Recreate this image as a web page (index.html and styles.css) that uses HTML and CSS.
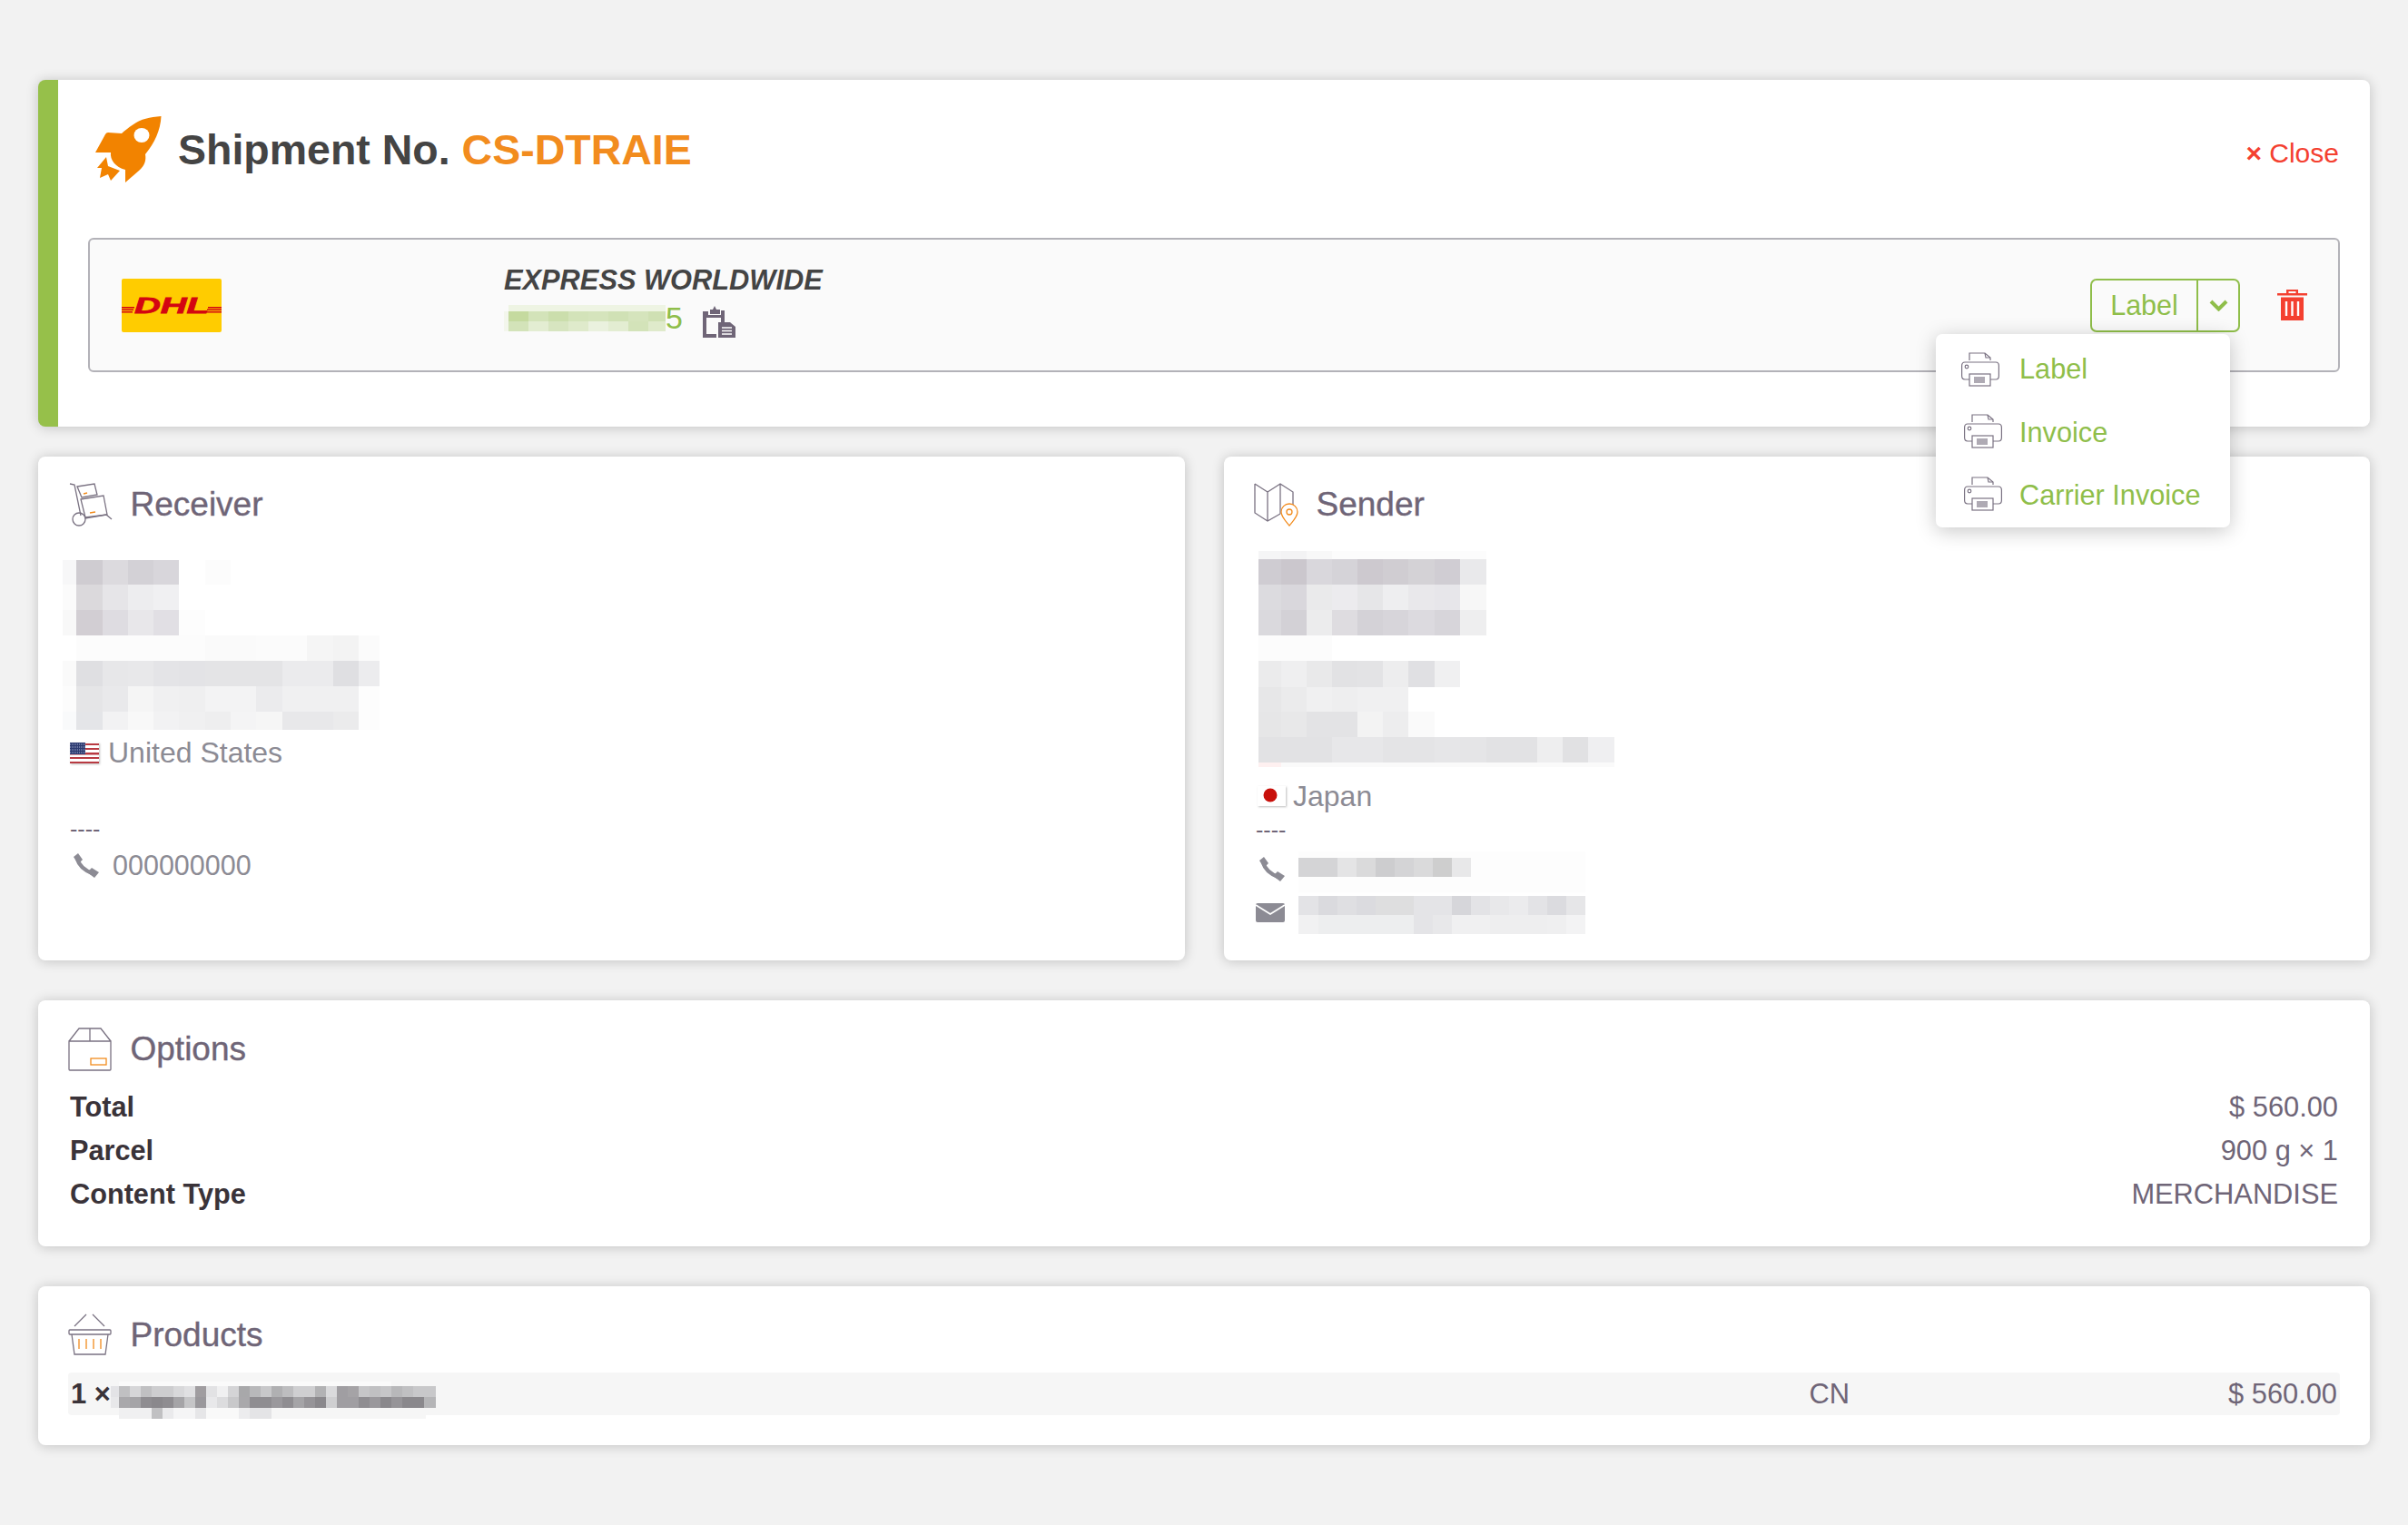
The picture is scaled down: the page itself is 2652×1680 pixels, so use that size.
FILE: index.html
```html
<!DOCTYPE html>
<html lang="en">
<head>
<meta charset="utf-8">
<title>Shipment CS-DTRAIE</title>
<link rel="stylesheet" href="styles.css">
</head>
<body>
<main class="page">
  <section class="card card-main">
    <header class="main-head">
      <div class="title-group">
        <svg class="rocket" viewBox="0 0 73 74" width="73" height="74"><path fill="#f28300" d="M72.5 0C60 1 50 3 42 9 36 13 32 16 29 19L14 18Q12 18 11 20L0 40 17 40C16 48 22 56 33 59L33 73 48 60C55 54 56 48 55 42 65 30 72 15 72.5 0Z"/><ellipse cx="51" cy="21" rx="8.5" ry="8" fill="#fff"/><path fill="#f28300" d="M12 45 14 55 27 60 17 71 14 64 5 68 7 57 2 57Z"/></svg>
        <h1 class="title">Shipment No. <span class="title-no">CS-DTRAIE</span></h1>
      </div>
      <a class="close"><b>×</b> Close</a>
    </header>
    <div class="carrier">
      <svg class="dhl" viewBox="0 0 110 59" width="110" height="59"><rect width="110" height="59" rx="2" fill="#fc0"/><g fill="#d40511"><rect y="31" width="14" height="1.5"/><rect y="33.5" width="13" height="1.5"/><rect y="36" width="12" height="1.5"/><rect x="95" y="31" width="15" height="1.5"/><rect x="94" y="33.5" width="16" height="1.5"/><rect x="93" y="36" width="17" height="1.5"/></g><text class="dhl-text" x="14" y="38" textLength="82" lengthAdjust="spacingAndGlyphs">DHL</text></svg>
      <div class="service">
        <div class="service-name">EXPRESS WORLDWIDE</div>
        <div class="tracking">
          <svg class="pix pix-tracking" width="178" height="29"><rect x="5" width="173" height="7" fill="#eef4e3"/><rect y="7" width="5" height="22" fill="#f3f6ec"/><rect x="5" y="7" width="22" height="11" fill="#c5da9f"/><rect x="27" y="7" width="22" height="11" fill="#d3e3b9"/><rect x="49" y="7" width="22" height="11" fill="#cbdeac"/><rect x="71" y="7" width="22" height="11" fill="#d3e3b9"/><rect x="93" y="7" width="22" height="11" fill="#d5e4bc"/><rect x="115" y="7" width="22" height="11" fill="#d0e1b5"/><rect x="137" y="7" width="22" height="11" fill="#d5e4bc"/><rect x="159" y="7" width="19" height="11" fill="#cfe0b3"/><rect x="5" y="18" width="22" height="11" fill="#d3e3b9"/><rect x="27" y="18" width="22" height="11" fill="#e3edd2"/><rect x="49" y="18" width="22" height="11" fill="#d7e5c0"/><rect x="71" y="18" width="22" height="11" fill="#dfeacb"/><rect x="93" y="18" width="22" height="11" fill="#eaf1de"/><rect x="115" y="18" width="22" height="11" fill="#e3edd2"/><rect x="137" y="18" width="22" height="11" fill="#d3e3b9"/><rect x="159" y="18" width="19" height="11" fill="#dfeacb"/></svg>
          <span class="tracking-end">5</span>
          <svg class="clip" viewBox="0 0 36 35" width="36" height="35"><path fill="#6f6577" d="M0 6H6V10H20V5H24V18H20V13H4V31H15V35H0ZM8 9V4H11L13 0 15 4H19V9Z"/><path fill="#6f6577" d="M17 18H30L36 23V35H17Z"/><path stroke="#fff" stroke-width="1.5" d="M21 24H32M21 27.500H32M21 31H32"/></svg>
        </div>
      </div>
      <div class="actions">
        <div class="split">
          <button class="split-label">Label</button>
          <button class="split-caret"><svg viewBox="0 0 21 13" width="21" height="13"><path d="M2 2 10.500 10.500 19 2" fill="none" stroke="#8fbe4a" stroke-width="4"/></svg></button>
          <ul class="menu">
            <li class="menu-item"><svg class="printer" viewBox="0 0 42 38" width="42" height="38"><g fill="none" stroke="#7a7282" stroke-width="1.200"><path d="M9 9V1H26L32 6V9"/><path d="M26 1 27 6H32" /><path d="M9 30H4Q.6 30 .6 26V15Q.6 11 4 11H38Q41.400 11 41.400 15V26Q41.400 30 38 30H32"/><circle cx="6" cy="16" r="1.800"/><rect x="9" y="24" width="23" height="13" fill="#fff"/><path d="M15 27V34M17 27V34M19 27V34M21 27V34M23 27V34M25 27V34"/></g></svg><span>Label</span></li>
            <li class="menu-item menu-item-shift"><svg class="printer" viewBox="0 0 42 38" width="42" height="38"><g fill="none" stroke="#7a7282" stroke-width="1.200"><path d="M9 9V1H26L32 6V9"/><path d="M26 1 27 6H32" /><path d="M9 30H4Q.6 30 .6 26V15Q.6 11 4 11H38Q41.400 11 41.400 15V26Q41.400 30 38 30H32"/><circle cx="6" cy="16" r="1.800"/><rect x="9" y="24" width="23" height="13" fill="#fff"/><path d="M15 27V34M17 27V34M19 27V34M21 27V34M23 27V34M25 27V34"/></g></svg><span>Invoice</span></li>
            <li class="menu-item menu-item-shift"><svg class="printer" viewBox="0 0 42 38" width="42" height="38"><g fill="none" stroke="#7a7282" stroke-width="1.200"><path d="M9 9V1H26L32 6V9"/><path d="M26 1 27 6H32" /><path d="M9 30H4Q.6 30 .6 26V15Q.6 11 4 11H38Q41.400 11 41.400 15V26Q41.400 30 38 30H32"/><circle cx="6" cy="16" r="1.800"/><rect x="9" y="24" width="23" height="13" fill="#fff"/><path d="M15 27V34M17 27V34M19 27V34M21 27V34M23 27V34M25 27V34"/></g></svg><span>Carrier Invoice</span></li>
          </ul>
        </div>
        <svg class="trash" viewBox="0 0 33 34" width="33" height="34"><path fill="#f44030" d="M10 0H23V4H33V6.500H0V4H10ZM12.500 2V4H20.500V2ZM4 8.500H29V34H4Z"/><path stroke="#fff" stroke-width="2.400" d="M10 13V29M16.500 13V29M23 13V29"/></svg>
      </div>
    </div>
  </section>

  <div class="two-col">
    <section class="card card-address">
      <header class="card-head">
        <svg class="head-icon" viewBox="0 0 50 48" width="50" height="48"><g fill="none" stroke="#7a7282" stroke-width="1.300"><path d="M2 1 7 2 14 36"/><circle cx="12" cy="40" r="7"/><path d="M18.500 39 42 35 48 40"/><path d="M10 4 29 1 32 13 15 16Z"/><path d="M14 18 39 14 43 35 19 38Z"/></g><path d="M17 12 21 11M24 33 30 32" stroke="#f28c1e" stroke-width="1.500"/></svg>
        <h2 class="card-title">Receiver</h2>
      </header>
      <svg class="pix pix-receiver" width="349" height="187"><rect width="15" height="27" fill="#f7f7f8"/><rect x="15" width="29" height="27" fill="#cfccd1"/><rect x="44" width="28" height="27" fill="#dcdade"/><rect x="72" width="28" height="27" fill="#d3d1d6"/><rect x="100" width="28" height="27" fill="#d8d6db"/><rect x="157" width="28" height="27" fill="#fcfcfc"/><rect y="27" width="15" height="28" fill="#fbfbfb"/><rect x="15" y="27" width="29" height="28" fill="#dbd9dc"/><rect x="44" y="27" width="28" height="28" fill="#e6e5e8"/><rect x="72" y="27" width="28" height="28" fill="#ededef"/><rect x="100" y="27" width="28" height="28" fill="#f0f0f2"/><rect y="55" width="15" height="28" fill="#f8f8f8"/><rect x="15" y="55" width="29" height="28" fill="#d2ced3"/><rect x="44" y="55" width="28" height="28" fill="#dedce1"/><rect x="72" y="55" width="28" height="28" fill="#e8e7ea"/><rect x="100" y="55" width="28" height="28" fill="#e1dfe4"/><rect x="128" y="55" width="29" height="28" fill="#fdfdfd"/><rect x="15" y="83" width="142" height="28" fill="#fcfcfc"/><rect x="157" y="83" width="56" height="28" fill="#fafafa"/><rect x="213" y="83" width="56" height="28" fill="#fbfbfb"/><rect x="269" y="83" width="29" height="28" fill="#f5f5f5"/><rect x="298" y="83" width="28" height="28" fill="#f3f3f3"/><rect x="326" y="83" width="23" height="28" fill="#fbfbfb"/><rect y="111" width="15" height="28" fill="#fafafa"/><rect x="15" y="111" width="29" height="28" fill="#dfdfe2"/><rect x="44" y="111" width="28" height="28" fill="#e7e7e9"/><rect x="72" y="111" width="28" height="28" fill="#e8e8ea"/><rect x="100" y="111" width="28" height="28" fill="#e4e4e7"/><rect x="128" y="111" width="29" height="28" fill="#e3e3e6"/><rect x="157" y="111" width="85" height="28" fill="#e4e4e6"/><rect x="242" y="111" width="56" height="28" fill="#ebebed"/><rect x="298" y="111" width="28" height="28" fill="#dfdfe2"/><rect x="326" y="111" width="23" height="28" fill="#ececee"/><rect y="139" width="15" height="28" fill="#fcfcfc"/><rect x="15" y="139" width="29" height="28" fill="#e5e5e7"/><rect x="44" y="139" width="28" height="28" fill="#e9e9eb"/><rect x="72" y="139" width="28" height="28" fill="#f5f5f5"/><rect x="100" y="139" width="28" height="28" fill="#f0f0f1"/><rect x="128" y="139" width="29" height="28" fill="#efeff0"/><rect x="157" y="139" width="56" height="28" fill="#f3f3f4"/><rect x="213" y="139" width="29" height="28" fill="#ebebed"/><rect x="242" y="139" width="84" height="28" fill="#f0f0f1"/><rect x="326" y="139" width="23" height="28" fill="#fdfdfd"/><rect y="167" width="15" height="20" fill="#f9fafb"/><rect x="15" y="167" width="29" height="20" fill="#e4e5e8"/><rect x="44" y="167" width="28" height="20" fill="#f2f2f3"/><rect x="72" y="167" width="28" height="20" fill="#f8f8f8"/><rect x="100" y="167" width="28" height="20" fill="#f2f2f3"/><rect x="128" y="167" width="29" height="20" fill="#f0f0f1"/><rect x="157" y="167" width="28" height="20" fill="#eeeeef"/><rect x="185" y="167" width="28" height="20" fill="#f4f4f5"/><rect x="213" y="167" width="29" height="20" fill="#f6f6f6"/><rect x="242" y="167" width="56" height="20" fill="#e8e8ea"/><rect x="298" y="167" width="28" height="20" fill="#ebebec"/><rect x="326" y="167" width="23" height="20" fill="#fdfdfd"/></svg>
      <div class="country country-us">
        <svg class="flag" viewBox="0 0 32 23" width="32" height="23"><rect width="32" height="23" fill="#fff"/><g fill="#b83a42"><rect y="1" width="32" height="2"/><rect y="6" width="32" height="2"/><rect y="11" width="32" height="2.500"/><rect y="16" width="32" height="2"/><rect y="21" width="32" height="2"/></g><rect width="17" height="13" fill="#2c3a70"/><path stroke="#aeb6d6" stroke-width="1" stroke-dasharray="1 1" d="M0 2H17M0 5H17M0 8H17M0 11H17"/></svg>
        <span>United States</span>
      </div>
      <div class="dashes dashes-receiver">----</div>
      <div class="contact contact-receiver">
        <svg class="phone" viewBox="0 0 29 27" width="29" height="27"><path fill="none" stroke="#8c8b94" stroke-width="4.500" d="M5 6C7 13 13 19 22 22"/><path fill="#8c8b94" d="M1 4 6 0 11 7 6 12ZM16 21 21 16 29 21 24 27Z"/></svg>
        <span>000000000</span>
      </div>
    </section>

    <section class="card card-address">
      <header class="card-head">
        <svg class="head-icon" viewBox="0 0 50 48" width="50" height="48"><g fill="none" stroke="#7a7282" stroke-width="1.300"><path d="M1 1 15 10 29 1 43 10V24M1 1V33L15 42 29 34M15 10V42M29 1V34"/></g><path fill="#fff" stroke="#f28c1e" stroke-width="1.300" d="M39 47C34 41 30 37 30 32A9 9 0 0 1 48 32C48 37 44 41 39 47Z"/><circle cx="39" cy="32" r="3" fill="none" stroke="#f28c1e" stroke-width="1.300"/></svg>
        <h2 class="card-title">Sender</h2>
      </header>
      <svg class="pix pix-sender" viewBox="0 0 392 234" preserveAspectRatio="none" width="392" height="238"><rect width="25" height="9" fill="#f5f5f6"/><rect x="25" width="28" height="9" fill="#f3f3f4"/><rect x="53" width="28" height="9" fill="#f8f8f8"/><rect x="81" width="170" height="9" fill="#fcfcfc"/><rect y="9" width="25" height="27" fill="#cfccd2"/><rect x="25" y="9" width="28" height="27" fill="#cbc7cd"/><rect x="53" y="9" width="28" height="27" fill="#d9d7dc"/><rect x="81" y="9" width="28" height="27" fill="#d5d3d8"/><rect x="109" y="9" width="28" height="27" fill="#cdc9cf"/><rect x="137" y="9" width="28" height="27" fill="#d0cdd2"/><rect x="165" y="9" width="29" height="27" fill="#d4d2d6"/><rect x="194" y="9" width="28" height="27" fill="#d0cdd3"/><rect x="222" y="9" width="29" height="27" fill="#e9e9eb"/><rect y="36" width="25" height="28" fill="#dcdbdf"/><rect x="25" y="36" width="28" height="28" fill="#d9d7dc"/><rect x="53" y="36" width="28" height="28" fill="#eaeaeb"/><rect x="81" y="36" width="28" height="28" fill="#ecebee"/><rect x="109" y="36" width="28" height="28" fill="#e6e6e8"/><rect x="137" y="36" width="28" height="28" fill="#eeeef0"/><rect x="165" y="36" width="29" height="28" fill="#e9e8eb"/><rect x="194" y="36" width="28" height="28" fill="#e7e6ea"/><rect x="222" y="36" width="29" height="28" fill="#f7f7f7"/><rect y="64" width="25" height="27" fill="#dad9dd"/><rect x="25" y="64" width="28" height="27" fill="#d3d1d6"/><rect x="53" y="64" width="28" height="27" fill="#ececed"/><rect x="81" y="64" width="28" height="27" fill="#dedce0"/><rect x="109" y="64" width="28" height="27" fill="#d4d2d7"/><rect x="137" y="64" width="28" height="27" fill="#d7d5da"/><rect x="165" y="64" width="29" height="27" fill="#dcdadf"/><rect x="194" y="64" width="28" height="27" fill="#d7d5da"/><rect x="222" y="64" width="29" height="27" fill="#eeeeef"/><rect y="91" width="81" height="28" fill="#fcfcfc"/><rect y="119" width="25" height="28" fill="#ebebec"/><rect x="25" y="119" width="28" height="28" fill="#efeff0"/><rect x="53" y="119" width="28" height="28" fill="#e9e9ea"/><rect x="81" y="119" width="28" height="28" fill="#e2e2e4"/><rect x="109" y="119" width="28" height="28" fill="#e3e3e5"/><rect x="137" y="119" width="28" height="28" fill="#ededee"/><rect x="165" y="119" width="29" height="28" fill="#e0e0e3"/><rect x="194" y="119" width="28" height="28" fill="#f0f0f1"/><rect y="147" width="25" height="27" fill="#e7e7e8"/><rect x="25" y="147" width="28" height="27" fill="#ebebec"/><rect x="53" y="147" width="28" height="27" fill="#f0f0f1"/><rect x="81" y="147" width="28" height="27" fill="#eeeeef"/><rect x="109" y="147" width="56" height="27" fill="#f0f0f1"/><rect y="174" width="25" height="28" fill="#e6e6e7"/><rect x="25" y="174" width="28" height="28" fill="#e8e8e9"/><rect x="53" y="174" width="56" height="28" fill="#e3e3e5"/><rect x="109" y="174" width="28" height="28" fill="#f3f3f3"/><rect x="137" y="174" width="28" height="28" fill="#ededee"/><rect x="165" y="174" width="29" height="28" fill="#fafafa"/><rect y="202" width="81" height="27" fill="#e2e2e4"/><rect x="81" y="202" width="56" height="27" fill="#e7e7e9"/><rect x="137" y="202" width="57" height="27" fill="#e4e4e6"/><rect x="194" y="202" width="28" height="27" fill="#e6e6e8"/><rect x="222" y="202" width="29" height="27" fill="#e5e5e7"/><rect x="251" y="202" width="56" height="27" fill="#e2e2e4"/><rect x="307" y="202" width="28" height="27" fill="#eeeeef"/><rect x="335" y="202" width="28" height="27" fill="#e1e1e3"/><rect x="363" y="202" width="29" height="27" fill="#efeff1"/><rect y="229" width="25" height="5" fill="#fef0f0"/><rect x="25" y="229" width="367" height="5" fill="#fafafa"/></svg>
      <div class="country country-jp">
        <svg class="flag flag-jp" viewBox="0 0 31 22" width="31" height="22"><rect width="31" height="22" fill="#fff"/><circle cx="14" cy="10" r="7.500" fill="#c8100b"/></svg>
        <span>Japan</span>
      </div>
      <div class="dashes dashes-sender">----</div>
      <div class="contact contact-sender-phone">
        <svg class="phone" viewBox="0 0 29 27" width="29" height="27"><path fill="none" stroke="#8c8b94" stroke-width="4.500" d="M5 6C7 13 13 19 22 22"/><path fill="#8c8b94" d="M1 4 6 0 11 7 6 12ZM16 21 21 16 29 21 24 27Z"/></svg>
        <svg class="pix" width="316" height="45"><rect width="316" height="45" fill="#fdfdfd"/><rect y="7" width="43" height="21" fill="#d4d4d6"/><rect x="43" y="7" width="21" height="21" fill="#e4e4e5"/><rect x="64" y="7" width="21" height="21" fill="#dadadb"/><rect x="85" y="7" width="21" height="21" fill="#cdcdcf"/><rect x="106" y="7" width="21" height="21" fill="#d4d4d6"/><rect x="127" y="7" width="21" height="21" fill="#dadadb"/><rect x="148" y="7" width="21" height="21" fill="#cecece"/><rect x="169" y="7" width="21" height="21" fill="#e8e8e9"/></svg>
      </div>
      <div class="contact contact-sender-mail">
        <svg class="mail" viewBox="0 0 32 21" width="32" height="21"><rect width="32" height="21" rx="2" fill="#8c8b94"/><path d="M0 2 16 12 32 2" fill="none" stroke="#fff" stroke-width="1.800"/></svg>
        <svg class="pix" width="316" height="42"><rect width="22" height="21" fill="#e3e3e6"/><rect x="22" width="21" height="21" fill="#dadade"/><rect x="43" width="21" height="21" fill="#dfdfe2"/><rect x="64" width="21" height="21" fill="#dbdbdf"/><rect x="85" width="42" height="21" fill="#dededf"/><rect x="127" width="42" height="21" fill="#e4e4e7"/><rect x="169" width="21" height="21" fill="#d6d6da"/><rect x="190" width="21" height="21" fill="#e3e3e6"/><rect x="211" width="21" height="21" fill="#e8e8ea"/><rect x="232" width="21" height="21" fill="#ebebed"/><rect x="253" width="21" height="21" fill="#e3e3e6"/><rect x="274" width="21" height="21" fill="#dbdbdf"/><rect x="295" width="21" height="21" fill="#e6e6e8"/><rect y="21" width="22" height="21" fill="#f1f1f2"/><rect x="22" y="21" width="105" height="21" fill="#edeeef"/><rect x="127" y="21" width="21" height="21" fill="#e4e4e7"/><rect x="148" y="21" width="21" height="21" fill="#e8e8ea"/><rect x="169" y="21" width="42" height="21" fill="#f0f0f1"/><rect x="211" y="21" width="63" height="21" fill="#eeeeef"/><rect x="274" y="21" width="21" height="21" fill="#efeff0"/><rect x="295" y="21" width="21" height="21" fill="#f3f3f4"/></svg>
      </div>
    </section>
  </div>

  <section class="card card-options">
    <header class="card-head">
      <svg class="head-icon" viewBox="0 0 50 48" width="50" height="48"><g fill="none" stroke="#7a7282" stroke-width="1.300"><path d="M1 15H47V46Q47 47 46 47H2Q1 47 1 46ZM1 15 12 1H36L47 15M24 1V15"/></g><rect x="25" y="34" width="17" height="7" fill="none" stroke="#f28c1e" stroke-width="1.300"/></svg>
      <h2 class="card-title">Options</h2>
    </header>
    <dl class="facts">
      <div class="fact"><dt>Total</dt><dd>$ 560.00</dd></div>
      <div class="fact"><dt>Parcel</dt><dd>900 g × 1</dd></div>
      <div class="fact"><dt>Content Type</dt><dd>MERCHANDISE</dd></div>
    </dl>
  </section>

  <section class="card card-products">
    <header class="card-head">
      <svg class="head-icon" viewBox="0 0 50 48" width="50" height="48"><g fill="none" stroke="#7a7282" stroke-width="1.300"><path d="M7 14 20 1M27 1 40 14"/><rect x="1" y="18" width="46" height="5" rx="1"/><path d="M4 23 7 45H41L44 23"/></g><path stroke="#f28c1e" stroke-width="1.300" d="M12 28V39M20 28V39M28 28V39M36 28V39"/></svg>
      <h2 class="card-title">Products</h2>
    </header>
    <div class="product">
      <div class="product-name"><b class="product-qty">1 ×</b>
        <svg class="pix pix-product" width="358" height="41"><rect x="9" width="300" height="5" fill="#fafafa"/><rect x="0" y="5" width="9" height="12" fill="#e3e3e6"/><rect x="9" y="5" width="12" height="12" fill="#c0c0c2"/><rect x="21" y="5" width="12" height="12" fill="#d6d6d8"/><rect x="33" y="5" width="12" height="12" fill="#c0c0c2"/><rect x="45" y="5" width="24" height="12" fill="#cdcdcf"/><rect x="69" y="5" width="12" height="12" fill="#d8d8da"/><rect x="81" y="5" width="12" height="12" fill="#e0e0e2"/><rect x="93" y="5" width="12" height="12" fill="#a09da0"/><rect x="105" y="5" width="12" height="12" fill="#e2e2e4"/><rect x="117" y="5" width="12" height="12" fill="#f0f0f1"/><rect x="129" y="5" width="12" height="12" fill="#d4d4d6"/><rect x="141" y="5" width="12" height="12" fill="#a8a8aa"/><rect x="153" y="5" width="12" height="12" fill="#b8b8ba"/><rect x="165" y="5" width="12" height="12" fill="#c8c8ca"/><rect x="177" y="5" width="12" height="12" fill="#b0b0b2"/><rect x="189" y="5" width="12" height="12" fill="#bdbdbf"/><rect x="201" y="5" width="24" height="12" fill="#cfcfd1"/><rect x="225" y="5" width="12" height="12" fill="#b2b2b4"/><rect x="237" y="5" width="12" height="12" fill="#dadadc"/><rect x="249" y="5" width="12" height="12" fill="#a09ea2"/><rect x="261" y="5" width="12" height="12" fill="#a5a3a6"/><rect x="273" y="5" width="12" height="12" fill="#c6c6c8"/><rect x="285" y="5" width="12" height="12" fill="#c0c0c2"/><rect x="297" y="5" width="12" height="12" fill="#c6c6c8"/><rect x="309" y="5" width="12" height="12" fill="#b8b8ba"/><rect x="321" y="5" width="12" height="12" fill="#c0c0c2"/><rect x="333" y="5" width="25" height="12" fill="#c8c8ca"/><rect x="0" y="17" width="9" height="12" fill="#e8e8ea"/><rect x="9" y="17" width="12" height="12" fill="#a9a8ab"/><rect x="21" y="17" width="12" height="12" fill="#a5a4a7"/><rect x="33" y="17" width="12" height="12" fill="#8f8d91"/><rect x="45" y="17" width="12" height="12" fill="#8a888c"/><rect x="57" y="17" width="12" height="12" fill="#8f8d91"/><rect x="69" y="17" width="12" height="12" fill="#a5a4a7"/><rect x="81" y="17" width="12" height="12" fill="#c5c5c7"/><rect x="93" y="17" width="12" height="12" fill="#9a989c"/><rect x="105" y="17" width="12" height="12" fill="#e8e8ea"/><rect x="117" y="17" width="12" height="12" fill="#dcdcde"/><rect x="129" y="17" width="12" height="12" fill="#c8c8ca"/><rect x="141" y="17" width="12" height="12" fill="#a9a8ab"/><rect x="153" y="17" width="24" height="12" fill="#8f8d91"/><rect x="177" y="17" width="12" height="12" fill="#9a989c"/><rect x="189" y="17" width="12" height="12" fill="#8f8d91"/><rect x="201" y="17" width="12" height="12" fill="#a5a4a7"/><rect x="213" y="17" width="12" height="12" fill="#969498"/><rect x="225" y="17" width="12" height="12" fill="#8a888c"/><rect x="237" y="17" width="12" height="12" fill="#cfcfd1"/><rect x="249" y="17" width="24" height="12" fill="#a09ea2"/><rect x="273" y="17" width="12" height="12" fill="#8f8d91"/><rect x="285" y="17" width="12" height="12" fill="#9a989c"/><rect x="297" y="17" width="12" height="12" fill="#8a888c"/><rect x="309" y="17" width="12" height="12" fill="#969498"/><rect x="321" y="17" width="24" height="12" fill="#8a888c"/><rect x="345" y="17" width="13" height="12" fill="#b5b5b7"/><rect x="9" y="29" width="12" height="12" fill="#f0f0f1"/><rect x="21" y="29" width="24" height="12" fill="#f0f0f1"/><rect x="45" y="29" width="12" height="12" fill="#c0c0c2"/><rect x="57" y="29" width="12" height="12" fill="#eaeaec"/><rect x="69" y="29" width="24" height="12" fill="#f5f5f6"/><rect x="93" y="29" width="12" height="12" fill="#e6e6e8"/><rect x="105" y="29" width="36" height="12" fill="#f9f9f9"/><rect x="141" y="29" width="12" height="12" fill="#ececee"/><rect x="153" y="29" width="24" height="12" fill="#e4e4e6"/><rect x="177" y="29" width="170" height="12" fill="#f6f6f6"/></svg>
      </div>
      <span class="product-origin">CN</span>
      <span class="product-price">$ 560.00</span>
    </div>
  </section>
</main>
</body>
</html>
```

FILE: styles.css
```css
* { box-sizing: border-box; }
html, body { margin: 0; padding: 0; }
body {
  background: #f2f2f2;
  font-family: "Liberation Sans", Arial, sans-serif;
  font-size: 30px;
  color: #6f6577;
}
svg { display: block; flex: none; }
.pix { shape-rendering: crispEdges; }

.page {
  padding: 88px 42px 0;
  display: flex;
  flex-direction: column;
  height: 1680px;
  overflow: hidden;
}
.card {
  background: #fff;
  border-radius: 8px;
  box-shadow: 0 1px 14px rgba(0, 0, 0, .2);
}

.card-main {
  height: 382px;
  flex: none;
  border-left: 22px solid #96c04a;
  padding: 40px 33px 60px 33px;
  margin-bottom: 33px;
  position: relative;
  z-index: 2;
}
.main-head {
  height: 74px;
  margin-bottom: 60px;
  padding-right: 1px;
  display: flex;
  justify-content: space-between;
  align-items: center;
}
.title-group { display: flex; align-items: center; gap: 18px; margin-left: 8px; }
.title { margin: 0; font-size: 46.500px; line-height: 56px; font-weight: 700; color: #444; }
.title-no { color: #f28c1e; }
.close { color: #f44030; margin-top: 8px; line-height: 36px; }
.close b { font-weight: 700; }

.carrier {
  height: 148px;
  border: 2px solid #b3b2b8;
  border-radius: 6px;
  background: #fafafa;
  padding: 0 34px 0 35px;
  display: flex;
  align-items: center;
}
.dhl { margin-right: 311px; }
.dhl-text { font: italic 700 24px "Liberation Sans", sans-serif; fill: #d40511; stroke: #d40511; stroke-width: .8px; }
.service { margin-bottom: 8px; }
.service-name { font-size: 30.800px; font-weight: 700; font-style: italic; color: #444; line-height: 36px; }
.tracking { display: flex; align-items: flex-start; margin-top: 10px; height: 36px; color: #8fbe4a; }
.pix-tracking { margin-top: -1px; }
.tracking-end { font-size: 34px; line-height: 26px; }
.clip { margin-left: 22px; }

.actions { margin-left: auto; display: flex; align-items: center; gap: 41px; }
.split {
  position: relative;
  width: 165px;
  height: 59px;
  border: 2px solid #8fbe4a;
  border-radius: 7px;
  display: flex;
}
.split-label, .split-caret {
  background: none;
  border: 0;
  padding: 0;
  margin: 0;
  font: inherit;
  color: #8fbe4a;
}
.split-label { width: 117px; border-right: 2px solid #8fbe4a; font-size: 30.500px; }
.split-caret { flex: 1; display: flex; align-items: center; justify-content: center; }
.menu {
  position: absolute;
  left: -172px;
  top: 59px;
  width: 324px;
  height: 213px;
  margin: 0;
  padding: 5px 0 0 28px;
  list-style: none;
  background: #fff;
  border-radius: 7px;
  box-shadow: 0 4px 22px rgba(0, 0, 0, .22);
}
.menu-item {
  height: 69.500px;
  display: grid;
  grid-template-columns: 64px 1fr;
  align-items: center;
  font-size: 30.700px;
  color: #8fbe4a;
}
.menu-item-shift .printer { margin: 0 0 4px 3px; }

.two-col { display: grid; flex: none; grid-template-columns: 1263px 1262px; gap: 43px; height: 555px; margin-bottom: 44px; }
.card-address { padding: 29px 35px 0; }
.card-head { display: flex; align-items: center; height: 48px; }
.head-icon { margin-left: -2px; margin-right: 18.500px; }
.card-title { margin: 0; font-size: 37px; font-weight: 400; line-height: 48px; color: #6f6577; -webkit-text-stroke: .4px #6f6577; }

.pix-receiver { margin: 37px 0 0 -8px; }
.pix-sender { margin: 27px 0 0 3px; }
.country { display: flex; align-items: center; height: 36px; font-size: 32px; color: #8c8b94; }
.country-us { margin-top: 7px; gap: 10px; }
.country-jp { margin-top: 14px; gap: 8px; }
.flag { filter: drop-shadow(1px 1px 1px rgba(0, 0, 0, .25)); }
.flag-jp { margin-left: 2px; }
.dashes { font-size: 25px; line-height: 30px; }
.dashes-receiver { margin-top: 51px; }
.dashes-sender { margin-top: 4px; }
.contact { display: flex; align-items: center; color: #8c8b94; }
.contact-receiver { margin-top: 7px; height: 36px; gap: 15px; font-size: 30.500px; }
.contact-receiver .phone { margin-left: 3px; }
.contact-sender-phone { margin-top: 9px; height: 45px; }
.contact-sender-phone .phone { margin: 0 15px 6px 3px; }
.contact-sender-mail { margin-top: 4px; height: 42px; }
.contact-sender-mail .mail { margin: 0 15px 6px 0; }

.card-options { height: 271px; flex: none; padding: 30px 35px 0; margin-bottom: 44px; }
.facts { margin: 16px 0 0; }
.fact { display: flex; justify-content: space-between; height: 48px; align-items: center; }
.fact dt { font-size: 30.700px; font-weight: 700; color: #3a3339; }
.fact dd { margin: 0; font-size: 30.800px; }

.card-products { height: 175px; flex: none; padding: 30px 35px 0; }
.product {
  margin: 17px -2px 0;
  height: 47px;
  padding: 0 3px;
  background: #f6f6f6;
  border-radius: 4px;
  display: grid;
  grid-template-columns: 1fr auto 537px;
  align-items: center;
  font-size: 30.800px;
}
.product-name { display: flex; align-items: center; height: 47px; }
.product-qty { width: 44px; font-size: 31px; color: #3a3339; white-space: nowrap; }
.pix-product { margin-top: 13px; }
.product-price { text-align: right; }
```
